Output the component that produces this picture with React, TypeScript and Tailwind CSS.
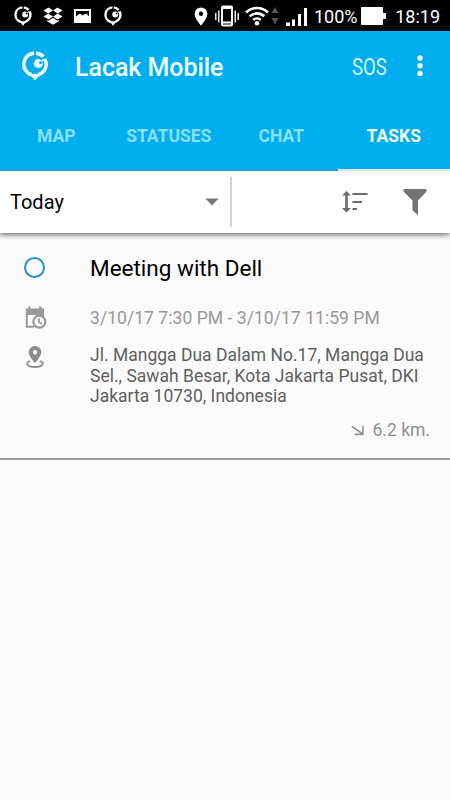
import { useState } from 'react';

const tabs = [
  { id: 'map', label: 'MAP' },
  { id: 'statuses', label: 'STATUSES' },
  { id: 'chat', label: 'CHAT' },
  { id: 'tasks', label: 'TASKS' }
];

const tasks = [
  {
    id: 1,
    title: 'Meeting with Dell',
    time: '3/10/17 7:30 PM - 3/10/17 11:59 PM',
    address: [
      'Jl. Mangga Dua Dalam No.17, Mangga Dua',
      'Sel., Sawah Besar, Kota Jakarta Pusat, DKI',
      'Jakarta 10730, Indonesia'
    ],
    distance: '6.2 km.'
  }
];

function LogoIcon({ className }: { className: string }) {
  return (
    <svg viewBox="0 0 26 30" className={className}>
      <path
        d="M12.2 2.1A11.1 11.1 0 0 0 9.6 23.8M14.2 2.1A11.1 11.1 0 0 1 21.4 5.8M22.8 8A11.1 11.1 0 0 1 16.4 23.8"
        fill="none"
        stroke="currentColor"
        strokeWidth="3.6"
      />
      <path d="M6.5 21.5Q13 24.5 19.5 21.5Q18 24.800 16 26L13 29.5 10 26Q8 24.8 6.5 21.5z" fill="currentColor" />
      <path
        d="M16.3 8.1a4.5 4.5 0 1 0 0 9 4.5 4.5 0 0 0 0-9zm2.3 1.8a1.500 1.500 0 1 1 0 3 1.500 1.500 0 0 1 0-3z"
        fill="currentColor"
        fillRule="evenodd"
      />
      <path d="M19.8 10.2l2.5-2.300" stroke="currentColor" strokeWidth="1.4" />
    </svg>
  );
}

function StatusBar() {
  return (
    <div className="flex h-[31px] items-center bg-black pl-[14px] pr-[10px] text-white">
      <LogoIcon className="h-5 w-[18px]" />
      <svg viewBox="0 0 20 18" className="ml-[11px] h-[18px] w-5" fill="currentColor">
        <path d="M5.5.5L10 3.5 5.2 6.5.5 3.4zM14.5.5l5 2.9-4.7 3.1L10 3.5zM.5 9.6l4.7-3.1L10 9.6l-4.5 3zM14.8 6.5l4.7 3.1-5 3L10 9.6zM10 10.7l4.6 3 1.3-.8v1.4L10 17.8l-5.9-3.5v-1.4l1.4.8z" />
      </svg>
      <svg viewBox="0 0 17 14" className="ml-[11px] h-[14px] w-[17px]">
        <path d="M0 0h17v14H0z" fill="currentColor" />
        <path d="M2 2h13v5.5l-2.5-3-2.5 1-1.5 1-2.5-2L2 7.5z" fill="#000" />
      </svg>
      <LogoIcon className="ml-[13px] h-5 w-[18px]" />

      <svg viewBox="0 0 14 19" className="ml-[72px] mt-[2px] h-[19px] w-[14px]">
        <path d="M7 .5a6.4 6.4 0 0 0-6.4 6.4C.6 11.4 7 18.5 7 18.5s6.4-7.1 6.4-11.6A6.4 6.4 0 0 0 7 .5zm0 4a2.2 2.2 0 1 1 0 4.4 2.2 2.2 0 0 1 0-4.4z" fill="currentColor" />
      </svg>
      <svg viewBox="0 0 24 22" className="ml-[7px] h-[22px] w-6" fill="none" stroke="currentColor">
        <rect x="7" y="1.5" width="10" height="19" rx="1" strokeWidth="2" />
        <path d="M6.5 3h11M7 17.5h10" strokeWidth="2" />
        <path d="M3.8 5.5v12M20.2 5.5v12M.8 8v7M23.2 8v7" strokeWidth="1.4" />
      </svg>
      <svg viewBox="0 0 24 21" className="ml-[6px] h-[21px] w-6" fill="none" stroke="currentColor" strokeWidth="2.6">
        <path d="M1 7.5a15.6 15.6 0 0 1 22 0M4.7 11.4a10.4 10.4 0 0 1 14.6 0M8.2 15a5.4 5.4 0 0 1 7.6 0" />
        <circle cx="12" cy="18.3" r="2.3" fill="currentColor" stroke="none" />
      </svg>
      <svg viewBox="0 0 8 18" className="ml-[2px] h-[18px] w-2 fill-[#555555]">
        <path d="M4 0l3.5 6h-7zM4 17.5L.5 11h7z" />
      </svg>
      <svg viewBox="0 0 22 19" className="ml-[7px] mt-[2px] h-[19px] w-[22px]" fill="currentColor">
        <path d="M0 15.5h4V19H0zM6 12.5h3V19H6zM12 7h3v12h-3zM18 1h3v18h-3z" />
      </svg>
      <span className="ml-[6px] w-[44px] whitespace-nowrap pt-[2px] text-[18px] leading-[29px]">100%</span>
      <svg viewBox="0 0 25 18" className="ml-[3px] h-[18px] w-[25px]" fill="currentColor">
        <path d="M0 0h22v6h3v6h-3v6H0z" />
      </svg>
      <span className="ml-auto whitespace-nowrap pt-[2px] text-[18px] leading-[29px]">18:19</span>
    </div>
  );
}

export default function App() {
  const [active, setActive] = useState('tasks');

  return (
    <div className="flex h-[800px] w-[450px] flex-col overflow-hidden bg-[#fafafa] font-['Roboto',sans-serif]">
      <StatusBar />

      <header className="bg-[#00aeef] text-[#effcff]">
        <div className="flex h-[70px] items-center pl-[22px] pr-[27px]">
          <LogoIcon className="h-[30px] w-[26px]" />
          <h1 className="ml-[27px] whitespace-nowrap pt-[3px] text-[25px] font-medium leading-8 tracking-[-0.05px]">
            Lacak Mobile
          </h1>
          <button className="ml-auto w-[35px] pt-[2px] text-left text-[24.5px] leading-8 text-[#d5f7ff]">
            <span className="inline-block origin-left scale-x-[0.76]">SOS</span>
          </button>
          <svg viewBox="0 0 6 22" className="ml-[30px] h-[22px] w-[6px]" fill="currentColor">
            <circle cx="3" cy="3" r="2.7" />
            <circle cx="3" cy="10.7" r="2.7" />
            <circle cx="3" cy="18.4" r="2.7" />
          </svg>
        </div>
        <nav className="grid h-[70px] grid-cols-4">
          {tabs.map(tab => (
            <button
              key={tab.id}
              onClick={() => setActive(tab.id)}
              className={`border-b-2 pt-[2px] text-[17.5px] font-bold ${
                active === tab.id ? 'border-[#effcff]' : 'border-transparent text-[#86e0fb]'
              }`}
            >
              {tab.label}
            </button>
          ))}
        </nav>
      </header>

      <div className="relative flex h-[62px] items-center bg-white shadow-[0_2px_5px_rgba(0,0,0,0.55)]">
        <button className="flex h-full w-[230px] items-center justify-between pl-[10px] pr-[11px] text-[20px]">
          Today
          <svg viewBox="0 0 14 8" className="h-2 w-[14px] fill-[#757575]">
            <path d="M.5.5h13L7 7.5z" />
          </svg>
        </button>
        <div className="h-[50px] w-[2px] bg-[#d2d2d2]" />
        <svg viewBox="0 0 26 22" className="ml-[110px] h-[22px] w-[26px] text-[#6b6b6b]" fill="currentColor">
          <path d="M4.5 0L9 4.5H5.8V17H9l-4.5 4.5L0 17h3.2V4.5H0zM10.5 2h15v2h-15zM10.5 10H20v2h-9.5zM10.5 17H15v2h-4.5z" />
        </svg>
        <svg viewBox="0 0 24 26" className="ml-[35px] h-[26px] w-6 fill-[#737373]">
          <path d="M.5 0h23v2.5L15 11.5V26l-5.5-4.5v-10L.5 2.5z" />
        </svg>
      </div>

      <main>
        {tasks.map(task => (
          <article key={task.id} className="h-[227px] border-b-2 border-[#9c9c9c] pl-[24px] pr-[20px] pt-[20px]">
            <div className="flex h-[30px] items-center">
              <div className="mb-[2px] h-[21px] w-[21px] rounded-full border-2 border-[#2492d1]" />
              <h2 className="ml-[45px] whitespace-nowrap text-[22.5px] leading-[30px]">{task.title}</h2>
            </div>
            <div className="mt-[22px] flex h-[26px] items-center text-[#999999]">
              <svg viewBox="0 0 23 24" className="h-6 w-[23px]">
                <path d="M4.3.5h2.2v3H4.3zM15.2.5h2.2v3h-2.2z" fill="currentColor" />
                <path d="M2.8 7v13.7H10M19 7v5" fill="none" stroke="currentColor" strokeWidth="2" />
                <path d="M1.8 2.5H20V9H1.8z" fill="currentColor" />
                <circle cx="15.3" cy="15.7" r="6" fill="#fafafa" stroke="currentColor" strokeWidth="2.2" />
                <path d="M15 12.2v4l3 1.7" fill="none" stroke="currentColor" strokeWidth="1.7" />
              </svg>
              <p className="ml-[43px] whitespace-nowrap text-[17.5px] tracking-[0.05px]">{task.time}</p>
            </div>
            <div className="mt-[15px] flex text-[#5f5f5f]">
              <svg viewBox="0 0 18 22" className="ml-[2px] h-[22px] w-[18px] text-[#8e8e8e]">
                <path d="M9 0a6.3 6.3 0 0 0-6.3 6.3C2.7 10.8 9 17 9 17s6.3-6.2 6.3-10.7A6.3 6.3 0 0 0 9 0zm0 4a2.2 2.2 0 1 1 0 4.4A2.2 2.2 0 0 1 9 4z" fill="currentColor" />
                <path d="M4.2 15C-1 16.5.5 21 9 21s10-4.5 4.8-6" fill="none" stroke="currentColor" strokeWidth="1.8" />
              </svg>
              <p className="ml-[46px] mt-[-1px] whitespace-nowrap text-[17.5px] leading-[20.5px] tracking-[0.01px]">
                {task.address.map(line => (
                  <span key={line} className="block">{line}</span>
                ))}
              </p>
            </div>
            <div className="mt-[11px] flex items-center justify-end text-[#929292]">
              <svg viewBox="0 0 14 14" className="mr-[8px] h-[14px] w-[14px]" fill="none" stroke="currentColor" strokeWidth="1.6">
                <path d="M.8 3.3l11 7.7M11.9 2.5v8.9M3.5 11.4h9" />
              </svg>
              <span className="text-[17.5px] leading-6">{task.distance}</span>
            </div>
          </article>
        ))}
      </main>
    </div>
  );
}
